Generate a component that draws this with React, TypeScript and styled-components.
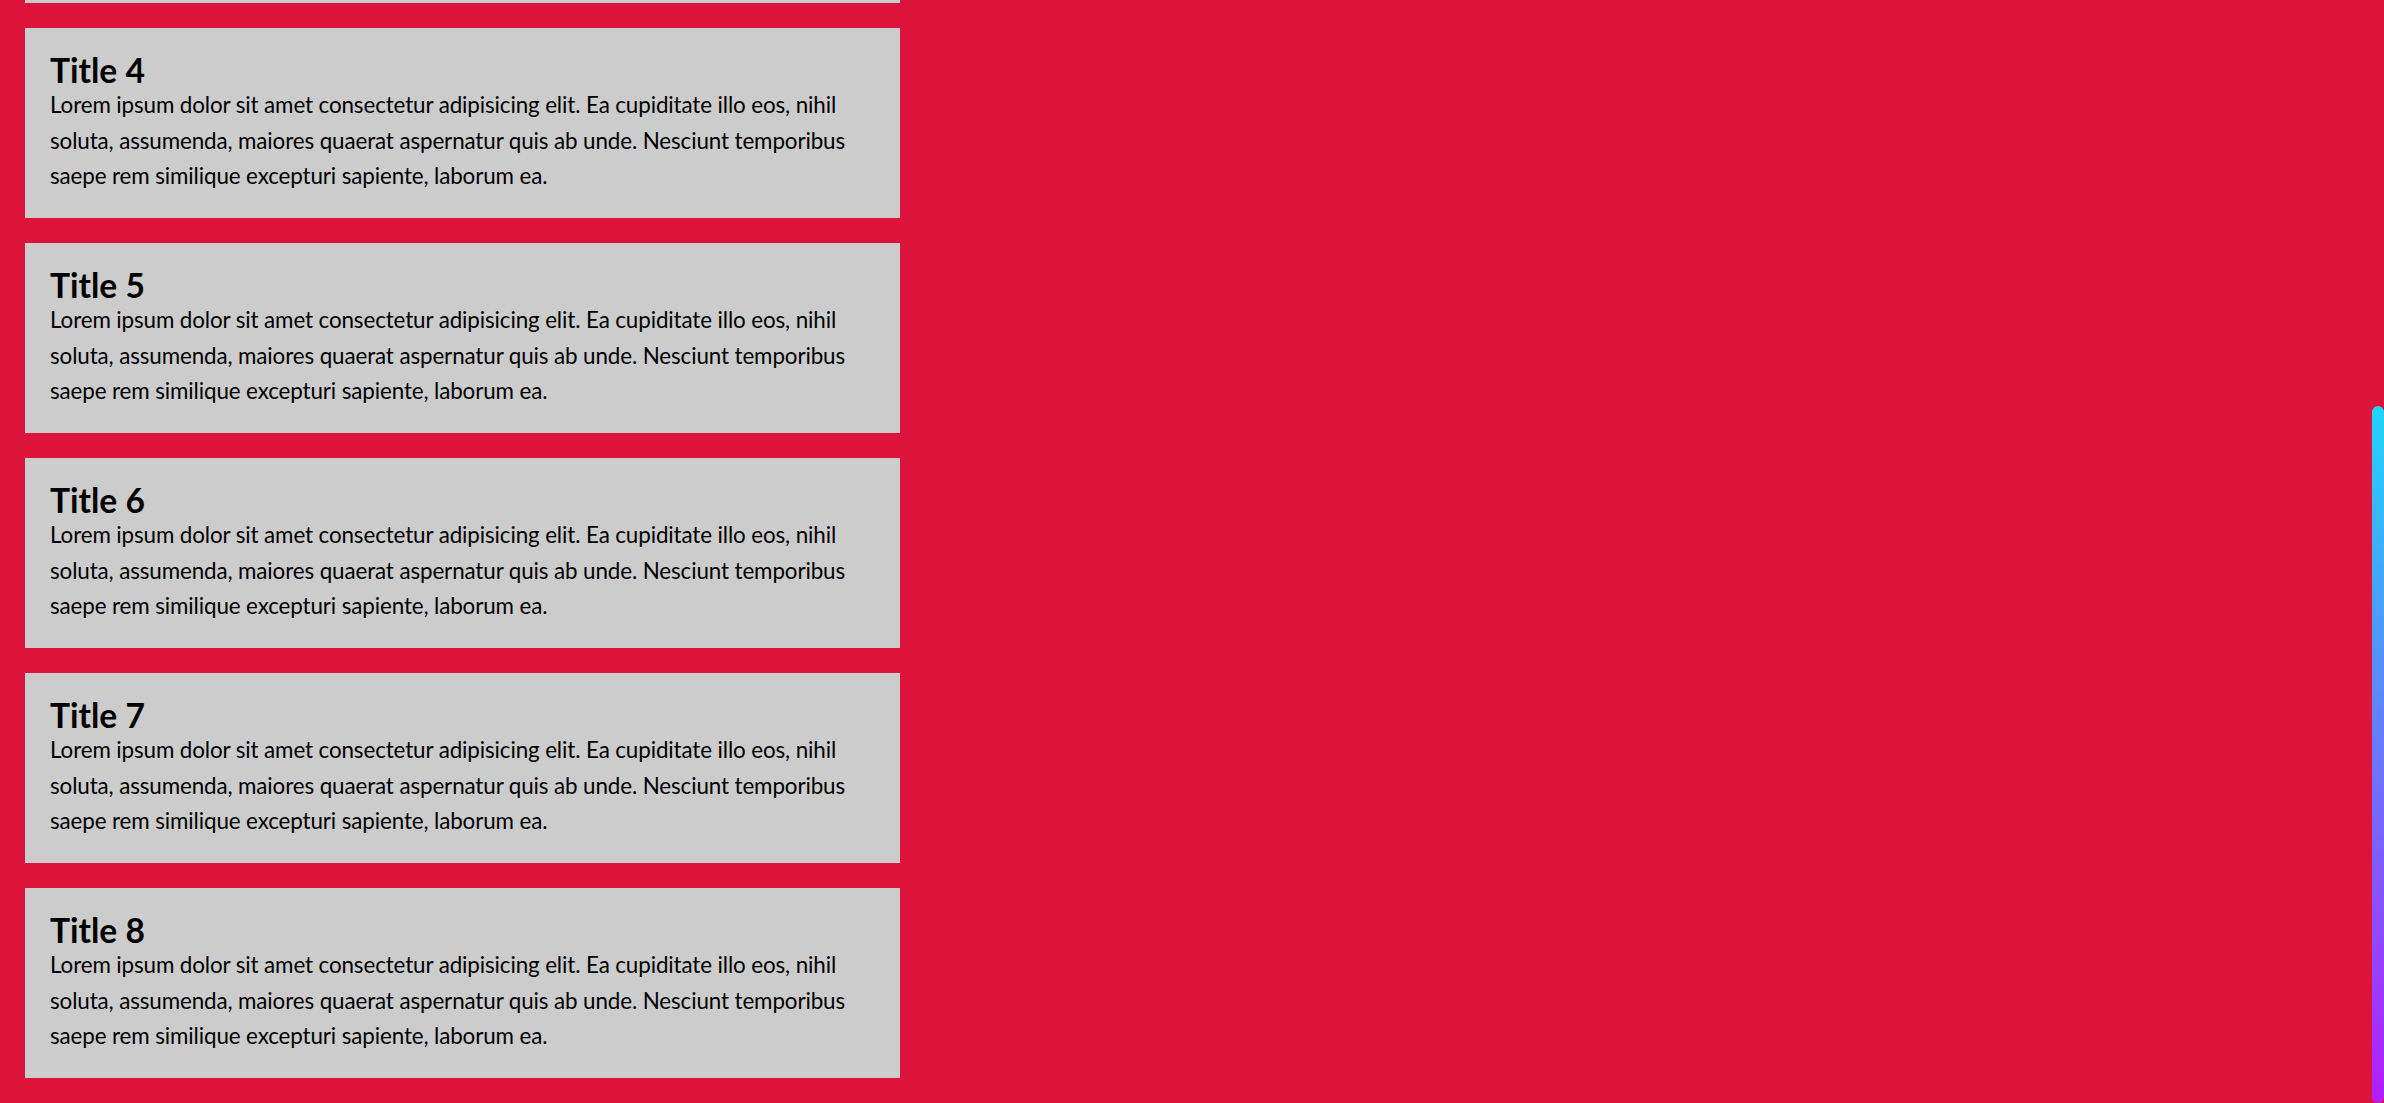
import React, { useLayoutEffect, useRef, useState } from "react";
import styled, { createGlobalStyle } from "styled-components";

const GlobalStyle = createGlobalStyle`
  html, body {
    margin: 0;
    padding: 0;
    height: 100%;
    overflow: hidden;
    background: #dc143c;
  }
  * { box-sizing: border-box; }
`;

const Viewport = styled.div`
  height: 100vh;
  overflow: hidden;
  background: #dc143c;
  font-family: Lato, "Segoe UI", "Liberation Sans", sans-serif;
  color: #000;
`;

const List = styled.main`
  display: flex;
  flex-direction: column;
  align-items: flex-start;
  gap: 25px;
  padding: 25px;
`;

const Card = styled.article`
  width: 875px;
  height: 190px;
  background: #cccccc;
  padding: 25px 25px 24px;
`;

const Title = styled.h2`
  margin: 0;
  font-size: 33.6px;
  line-height: 34px;
  font-weight: 700;
`;

const Text = styled.p`
  margin: 0;
  font-size: 22.4px;
  line-height: 35.67px;
  letter-spacing: -0.12px;
`;

const Thumb = styled.div`
  position: fixed;
  right: 0;
  width: 12px;
  border-radius: 6px;
  background: linear-gradient(to bottom, #1ed4ff, #b41cff);
`;

const LOREM =
  "Lorem ipsum dolor sit amet consectetur adipisicing elit. Ea cupiditate illo eos, nihil soluta, assumenda, maiores quaerat aspernatur quis ab unde. Nesciunt temporibus saepe rem similique excepturi sapiente, laborum ea.";

const items = Array.from({ length: 8 }, (_, i) => ({ id: i + 1, title: `Title ${i + 1}` }));

export default function App() {
  const ref = useRef<HTMLDivElement>(null);
  const [thumb, setThumb] = useState({ top: 406, height: 697 });

  useLayoutEffect(() => {
    const el = ref.current;
    if (!el) return;
    el.scrollTop = el.scrollHeight - el.clientHeight;
    const h = el.clientHeight;
    const sh = el.scrollHeight;
    setThumb({
      top: (el.scrollTop / sh) * h,
      height: (h * h) / sh,
    });
  }, []);

  return (
    <>
      <GlobalStyle />
      <Viewport ref={ref}>
        <List>
          {items.map((it) => (
            <Card key={it.id}>
              <Title>{it.title}</Title>
              <Text>{LOREM}</Text>
            </Card>
          ))}
        </List>
      </Viewport>
      <Thumb style={{ top: thumb.top, height: thumb.height }} />
    </>
  );
}
